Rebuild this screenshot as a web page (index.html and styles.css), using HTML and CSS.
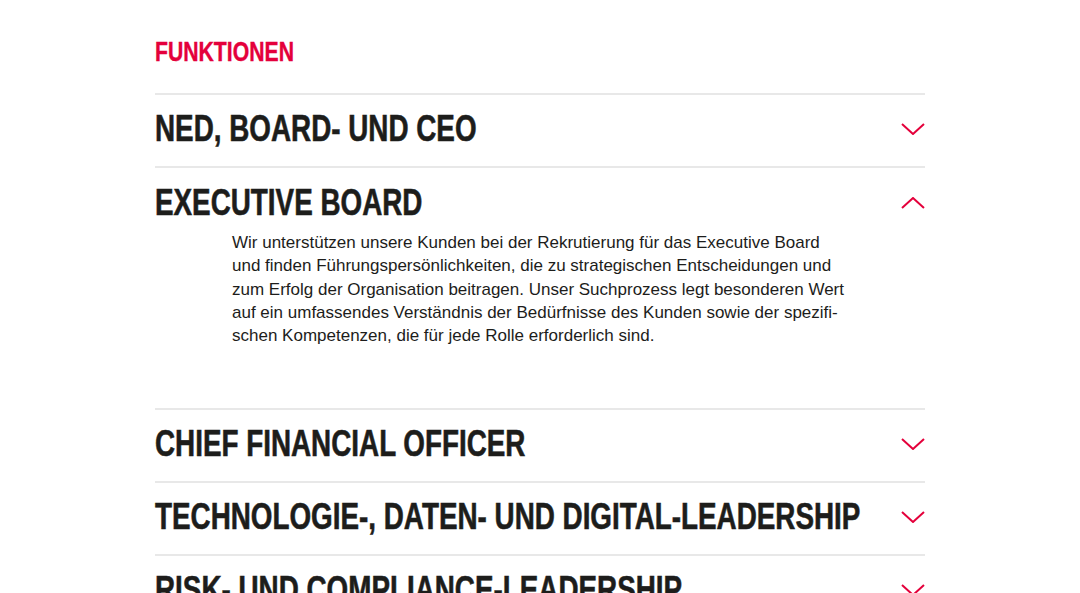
FILE: index.html
```html
<!DOCTYPE html>
<html lang="de">
<head>
<meta charset="utf-8">
<link rel="stylesheet" href="styles.css">
</head>
<body>
<main class="functions">
  <h2 class="section-title"><span class="cond">FUNKTIONEN</span></h2>
  <ul class="accordion">
    <li class="item">
      <div class="item-head">
        <h3 class="item-title"><span class="cond">NED, BOARD- UND CEO</span></h3>
        <svg class="chev" viewBox="0 0 24 12" width="24" height="12"><path d="M1 1 L12 11 L23 1" /></svg>
      </div>
    </li>
    <li class="item open">
      <div class="item-head">
        <h3 class="item-title"><span class="cond">EXECUTIVE BOARD</span></h3>
        <svg class="chev" viewBox="0 0 24 12" width="24" height="12"><path d="M1 11 L12 1 L23 11" /></svg>
      </div>
      <p class="item-body">Wir unterstützen unsere Kunden bei der Rekrutierung für das Executive Board<br>und finden Führungspersönlichkeiten, die zu strategischen Entscheidungen und<br>zum Erfolg der Organisation beitragen. Unser Suchprozess legt besonderen Wert<br>auf ein umfassendes Verständnis der Bedürfnisse des Kunden sowie der spezifi-<br>schen Kompetenzen, die für jede Rolle erforderlich sind.</p>
    </li>
    <li class="item">
      <div class="item-head">
        <h3 class="item-title"><span class="cond">CHIEF FINANCIAL OFFICER</span></h3>
        <svg class="chev" viewBox="0 0 24 12" width="24" height="12"><path d="M1 1 L12 11 L23 1" /></svg>
      </div>
    </li>
    <li class="item">
      <div class="item-head">
        <h3 class="item-title"><span class="cond">TECHNOLOGIE-, DATEN- UND DIGITAL-LEADERSHIP</span></h3>
        <svg class="chev" viewBox="0 0 24 12" width="24" height="12"><path d="M1 1 L12 11 L23 1" /></svg>
      </div>
    </li>
    <li class="item">
      <div class="item-head">
        <h3 class="item-title"><span class="cond">RISK- UND COMPLIANCE-LEADERSHIP</span></h3>
        <svg class="chev" viewBox="0 0 24 12" width="24" height="12"><path d="M1 1 L12 11 L23 1" /></svg>
      </div>
    </li>
  </ul>
</main>
</body>
</html>
```
FILE: styles.css
```css
html, body {
  margin: 0;
  padding: 0;
  background: #fff;
  overflow: hidden;
}
body {
  font-family: "Liberation Sans", Arial, sans-serif;
  color: #1d1d1b;
}
.functions {
  width: 770px;
  margin: 0 auto;
  padding-top: 36px;
}
.cond {
  display: inline-block;
  white-space: nowrap;
  transform-origin: left center;
}
.section-title {
  margin: 0 0 25px;
  font-weight: 700;
  font-size: 27px;
  line-height: 32px;
  color: #e4003b;
  -webkit-text-stroke: 0.4px #e4003b;
}
.section-title .cond {
  transform: scaleX(0.785);
}
.accordion {
  list-style: none;
  margin: 0;
  padding: 0;
}
.item {
  border-top: 2px solid #e8e8e8;
}
.item-head {
  box-sizing: border-box;
  height: 71px;
  padding-bottom: 4px;
  display: flex;
  align-items: center;
  justify-content: space-between;
}
.item.open .item-head {
  padding-bottom: 1px;
}
.item-title {
  margin: 0;
  flex: 1;
  min-width: 0;
  font-weight: 700;
  font-size: 37px;
  line-height: 40px;
  color: #1d1d1b;
  -webkit-text-stroke: 0.6px #1d1d1b;
}
.item-title .cond {
  transform: scaleX(0.752);
}
.chev {
  display: block;
  flex: none;
  margin-right: 0;
}
.chev path {
  fill: none;
  stroke: #e4003b;
  stroke-width: 2;
}
.item-body {
  margin: -8px 0 0 77px;
  padding-bottom: 61px;
  font-size: 17px;
  line-height: 23.3px;
  color: #1d1d1b;
}
```
